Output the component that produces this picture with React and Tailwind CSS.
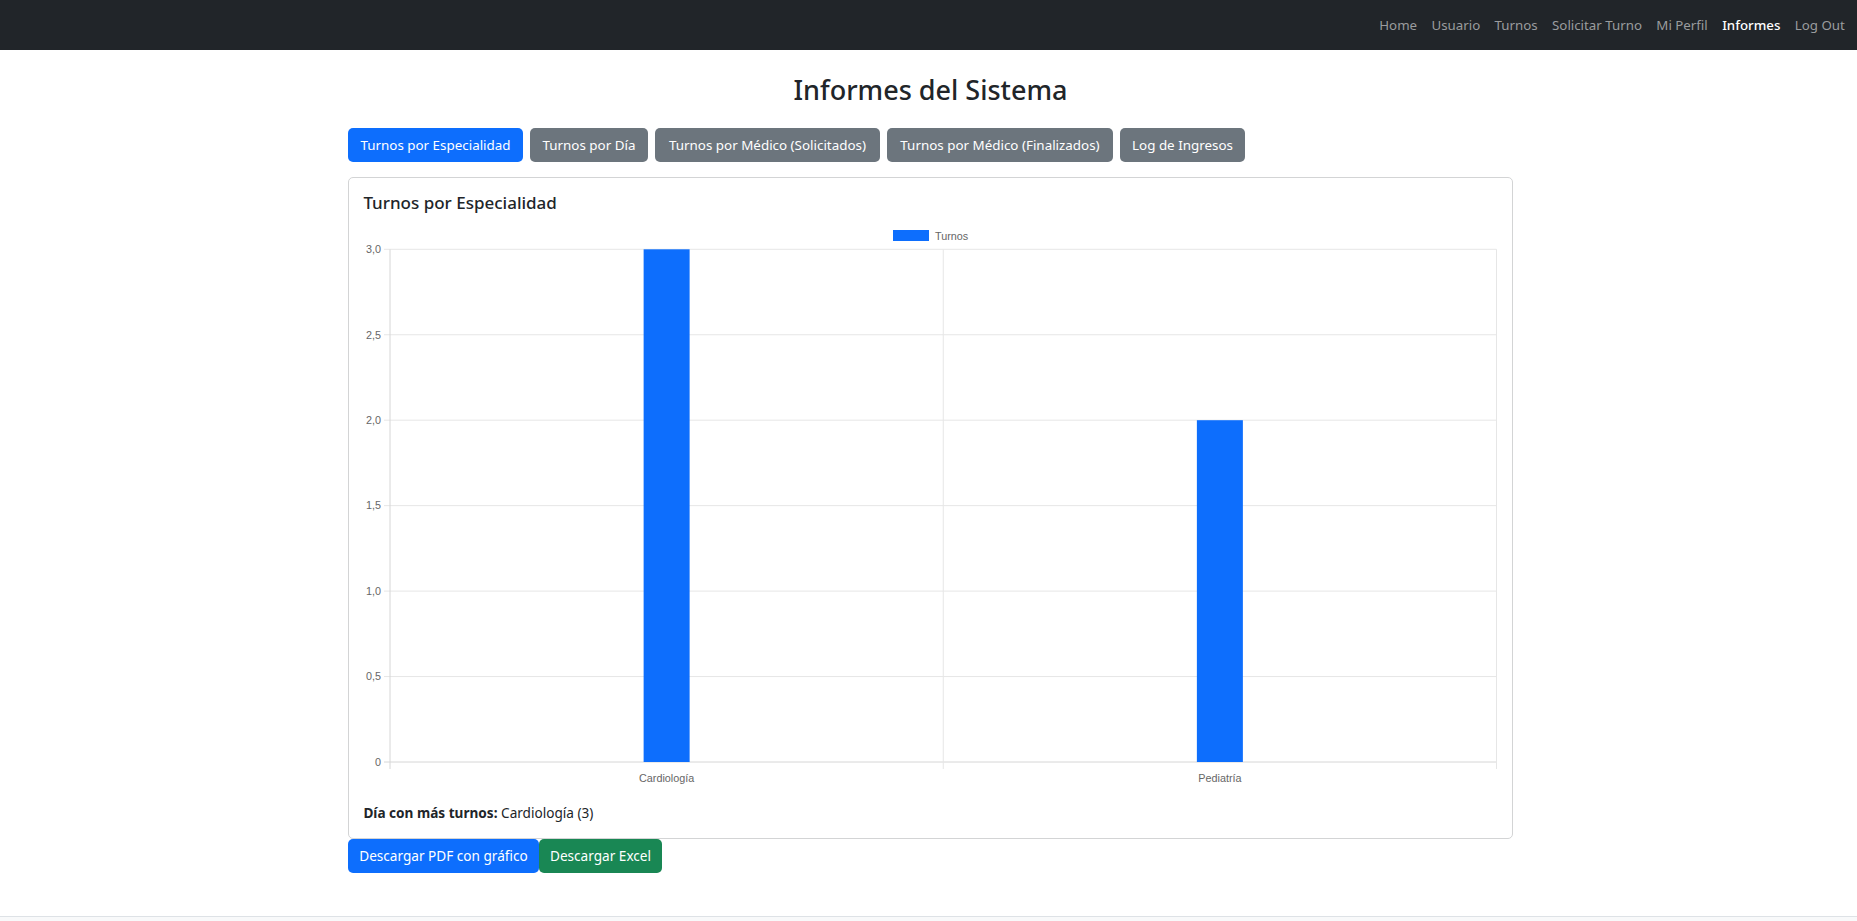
import React from 'react';

const navLinks = ['Home', 'Usuario', 'Turnos', 'Solicitar Turno', 'Mi Perfil', 'Informes', 'Log Out'];

const tabs = [
  { label: 'Turnos por Especialidad', width: 'w-[175px]', active: true },
  { label: 'Turnos por Día', width: 'w-[118px]' },
  { label: 'Turnos por Médico (Solicitados)', width: 'w-[225px]' },
  { label: 'Turnos por Médico (Finalizados)', width: 'w-[226px]' },
  { label: 'Log de Ingresos', width: 'w-[125px]' },
];

const data = [
  { label: 'Cardiología', value: 3 },
  { label: 'Pediatría', value: 2 },
];

// chart geometry (px, relative to the canvas)
const LEFT = 27;
const RIGHT = 1133.5;
const TOP = 28.3;
const BOTTOM = 541;
const MAX = 3;
const yTicks = ['3,0', '2,5', '2,0', '1,5', '1,0', '0,5', '0'];

function BarChart() {
  const step = (BOTTOM - TOP) / 6;
  const catW = (RIGHT - LEFT) / data.length;
  const barW = 46;
  const font = '"Liberation Sans", Arial, sans-serif';

  return (
    <svg width="1134" height="566" className="block">
      {/* Legend */}
      <rect x="530" y="9" width="36" height="11" fill="#0d6efd" />
      <text x="572" y="18.5" fontSize="10.8" fill="#666" fontFamily={font}>Turnos</text>

      {/* Horizontal grid */}
      {yTicks.map((t, i) => {
        const y = TOP + i * step;
        return (
          <g key={t}>
            <line x1="21" x2={RIGHT} y1={y} y2={y} stroke={i === 6 ? '#d6d6d6' : '#e6e6e6'} strokeWidth="1" />
            <text x="18" y={y + 3.8} textAnchor="end" fontSize="10.8" fill="#666" fontFamily={font}>{t}</text>
          </g>
        );
      })}

      {/* Vertical grid */}
      {[LEFT, LEFT + catW, RIGHT].map((x, i) => (
        <line key={i} x1={x} x2={x} y1={TOP} y2={BOTTOM + 7} stroke={i === 0 ? '#d6d6d6' : '#e6e6e6'} strokeWidth="1" />
      ))}

      {/* Bars */}
      {data.map((d, i) => {
        const cx = LEFT + catW * (i + 0.5);
        const h = (d.value / MAX) * (BOTTOM - TOP);
        return (
          <g key={d.label}>
            <rect x={cx - barW / 2} y={BOTTOM - h} width={barW} height={h} fill="#0d6efd" />
            <text x={cx} y={561} textAnchor="middle" fontSize="10.8" fill="#666" fontFamily={font}>{d.label}</text>
          </g>
        );
      })}
    </svg>
  );
}

export default function App() {
  return (
    <div className="min-h-screen bg-white text-[#212529] font-['Noto_Sans','Segoe_UI',sans-serif]">
      {/* Navbar */}
      <nav className="h-[50px] bg-[#212529] flex items-center justify-end pr-[5px]">
        <ul className="flex items-center">
          {navLinks.map((l) => (
            <li key={l}>
              <a
                href="#"
                className={`block px-[7.2px] text-[13.3px] leading-[21px] ${
                  l === 'Informes' ? 'text-white font-medium' : 'text-[#9a9c9e]'
                }`}
              >
                {l}
              </a>
            </li>
          ))}
        </ul>
      </nav>

      <div className="pl-[4px]">
        <div className="w-[1165px] mx-auto">
          {/* Page title */}
          <h2 className="text-center text-[27px] leading-[35px] font-medium mt-[22px] mb-[21px]">Informes del Sistema</h2>

          {/* Tabs */}
          <div className="flex gap-[7px]">
            {tabs.map((t) => (
              <button
                key={t.label}
                className={`${t.width} h-[34px] rounded-[5px] text-white text-[13.4px] whitespace-nowrap ${
                  t.active ? 'bg-[#0d6efd]' : 'bg-[#6c757d]'
                }`}
              >
                {t.label}
              </button>
            ))}
          </div>

          {/* Chart card */}
          <div className="mt-[15px] border border-[#d3d4d5] rounded-[5px] px-[14.4px] pt-[14.4px] pb-[14.4px] h-[662px]">
            <h5 className="text-[17px] leading-[21.6px] font-medium mb-[7.2px]">Turnos por Especialidad</h5>
            <BarChart />
            <p className="mt-[14.4px] text-[13.6px] leading-[21.6px]">
              <strong className="font-bold">Día con más turnos:</strong> Cardiología (3)
            </p>
          </div>

          {/* Downloads */}
          <div className="flex">
            <button className="w-[191px] h-[34px] rounded-[5px] bg-[#0d6efd] text-white text-[13.6px]">Descargar PDF con gráfico</button>
            <button className="w-[123px] h-[34px] rounded-[5px] bg-[#198754] text-white text-[13.6px]">Descargar Excel</button>
          </div>
        </div>
      </div>

      {/* Footer */}
      <footer className="mt-[43px] h-[40px] border-t border-[#dee2e6] bg-[#f8f9fa]"></footer>
    </div>
  );
}
